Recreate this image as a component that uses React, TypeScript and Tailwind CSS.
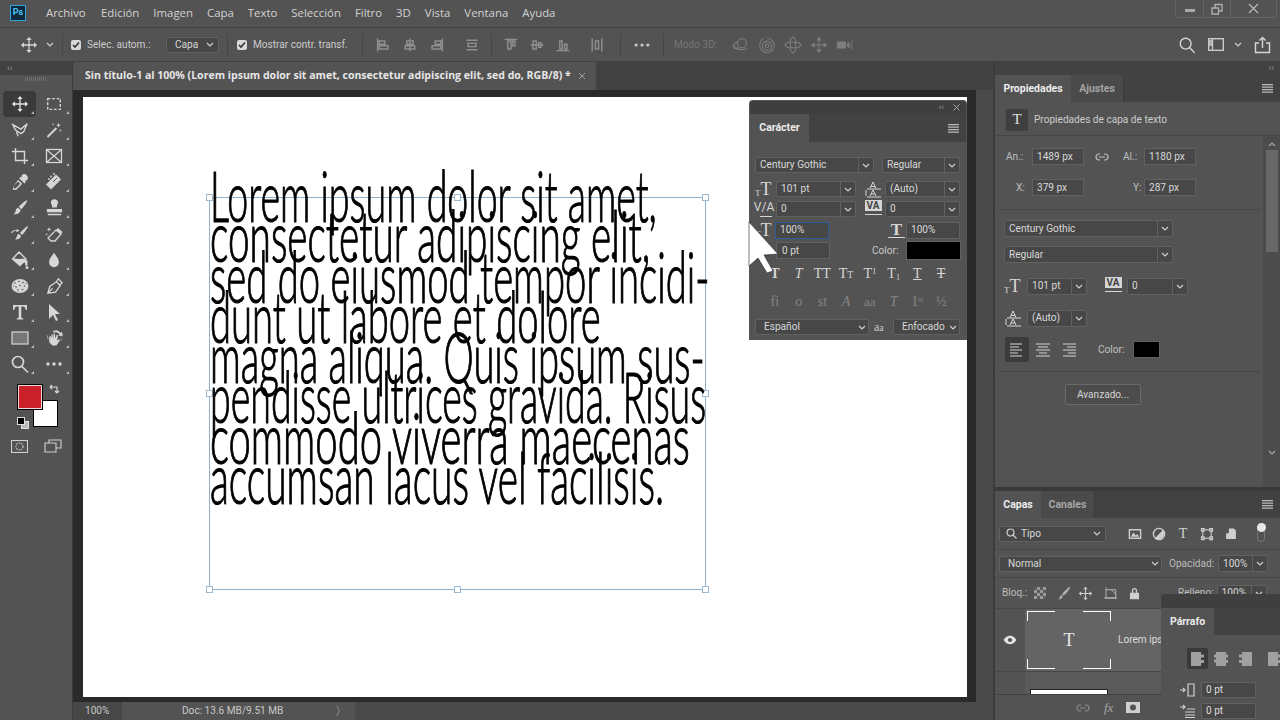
import React from "react";

type P = { d?: string; s?: number; c?: string; children?: React.ReactNode; box?: number; sw?: number; stroke?: boolean };
function Ic({ d, s = 20, c = "text-[#d6d6d6]", children, box = 20, sw = 1.4, stroke = false }: P) {
  return (
    <svg width={s} height={s} viewBox={`0 0 ${box} ${box}`} className={`shrink-0 ${c}`} fill={stroke ? "none" : "currentColor"} stroke={stroke ? "currentColor" : "none"} strokeWidth={sw}>
      {d ? <path d={d} /> : null}
      {children}
    </svg>
  );
}
const moveD = "M9.3 4h1.4v5.3H16v1.4h-5.3V16H9.3v-5.3H4V9.3h5.3zM10 1l3 3.4H7zM10 19l-3-3.4h6zM1 10l3.4-3v6zM19 10l-3.4 3V7z";
const Chev = ({ c = "text-[#cfcfcf]" }: { c?: string }) => (
  <svg width="8" height="5" viewBox="0 0 8 5" className={`shrink-0 ${c}`} fill="none" stroke="currentColor" strokeWidth="1.2"><path d="M1 1l3 3 3-3" /></svg>
);

const tools: React.ReactNode[] = [
  <Ic d={moveD} s={18} c="text-[#e4e4e4]" />,
  <Ic stroke sw={1.6} s={18}><rect x="3" y="4" width="14" height="12" strokeDasharray="3 2" /></Ic>,
  <Ic stroke sw={1.5} s={18} d="M2 4l9 5 7-6-4 9-3 2-3-2-3-2zM6 12l2 5" />,
  <Ic s={18}><path d="M2 17L12 7l1.5 1.5L3.5 18.5z" /><path d="M15 2l.7 2 2 .7-2 .7-.7 2-.7-2-2-.7 2-.7zM9 2l.4 1.2 1.2.4-1.2.4L9 5.200l-.4-1.200-1.200-.4 1.200-.4zM17 9l.4 1.200 1.200.4-1.200.4-.4 1.200-.4-1.200-1.200-.4 1.200-.4z" /></Ic>,
  <Ic stroke sw={1.6} s={18} d="M5 1v14h14M1 5h14v14" />,
  <Ic stroke sw={1.3} s={20}><rect x="2.500" y="3.500" width="15" height="13" /><path d="M3 4l14 12M17 4L3 16" /></Ic>,
  <Ic s={18}><path d="M12 2.500a2.600 2.600 0 0 1 5.500 5.500l-2 1.300 1 1-1.500 1.500-6-6 1.500-1.500 1 1z" /><path d="M8 7.500l4.500 4.500-6.500 6.500-3 .5-1-1 .5-3zm0 2l-5 5-.3 1.800.6.6L5.200 17l5-5z" /></Ic>,
  <Ic s={20}><path d="M2 14L12 4l5 5-10 10z" transform="translate(0 -1.500)" /><circle cx="5" cy="7" r=".9" /><circle cx="7" cy="4.500" r=".9" /><circle cx="10" cy="2" r=".9" /><path d="M9 10l4-4" stroke="#535353" strokeWidth="1" /></Ic>,
  <Ic s={18}><path d="M18 1.500c.6.600-3 6.500-6.500 10l-2.800-2.800C12 5 17.400.900 18 1.500z" /><path d="M8.200 9.800l2.500 2.500c-.3 3-3.500 5-8 4.800 1.800-1.500 2.300-2.500 2.500-4 .2-1.800 1.500-3 3-3.300z" /></Ic>,
  <Ic s={19}><path d="M7.500 9h5V7.500c0-1.500 1.200-2 1.200-3.500a3.500 3.500 0 0 0-7.500 0c0 1.500 1.300 2 1.300 3.500z" /><path d="M2 10.500h16V14H2zM3 15.500h14V17H3z" /></Ic>,
  <Ic s={20}><path d="M18 2c.5.500-3 6-6 9l-2-2c3-3.500 7.500-7.500 8-7z" /><path d="M9 10l2 2c-.5 2.500-3 3.800-6 3.500 1.200-1.200 1.500-2 1.800-3 .3-1.300 1-2.200 2.200-2.500z" /><path d="M1 9c.8-2.200 3-3.500 6-3l-.3-1.500L9.500 7 6.200 8l.3-1.200C4.500 6.500 3 7.500 2.300 9z" /></Ic>,
  <Ic s={20}><path d="M4 14l8-8 5 4-6 7H7z" fill="none" stroke="currentColor" strokeWidth="1.300" /><path d="M12 6l5 4 1.500-2-4.500-4z" /><path d="M5 3l.6 1.800 1.800.6-1.800.6L5 7.800 4.400 6l-1.800-.6 1.800-.6zM2.500 9l.4 1 1 .4-1 .4-.4 1-.4-1-1-.4 1-.4z" /></Ic>,
  <Ic s={20}><path d="M9 2l7 7-6 6.500L2.500 9z" fill="none" stroke="currentColor" strokeWidth="1.400" /><path d="M3 9c2-1 4 0 6 0s4-.5 6 0l2.500 2v3.500a1.200 1.200 0 0 1-2.400 0V13l-1-.6L10 15.500z" /><circle cx="17" cy="17.500" r="1.500" /></Ic>,
  <Ic s={18} d="M10 2c3 4.500 5.500 7 5.500 10.500a5.500 5.500 0 0 1-11 0C4.500 9 7 6.500 10 2z" />,
  <Ic s={20}><ellipse cx="10" cy="10" rx="8.500" ry="7" /><g fill="#535353"><circle cx="5" cy="7" r=".8" /><circle cx="9" cy="5.500" r=".8" /><circle cx="13" cy="6.500" r=".8" /><circle cx="6" cy="11" r=".8" /><circle cx="10" cy="9.500" r=".8" /><circle cx="14.500" cy="10" r=".8" /><circle cx="8" cy="14" r=".8" /><circle cx="12.500" cy="13.500" r=".8" /><circle cx="3.500" cy="10" r=".6" /><circle cx="16" cy="7.500" r=".6" /></g></Ic>,
  <Ic stroke sw={1.4} s={19} d="M3 17l2-7 7-5 4 4-5 7zM3 17l5-5M12 5l2-3 4 4-3 3" />,
  <Ic s={20} d="M3 3h14v5h-1.300c-.2-2-1-3.400-3-3.400h-1.400V15c0 1 .6 1.300 2 1.400V17.500H6.700v-1.100c1.400-.1 2-.4 2-1.400V4.600H7.300c-2 0-2.800 1.400-3 3.400H3z" />,
  <Ic s={20} d="M5 2l11 10h-5l3 6-2 1-3-6-4 4z" />,
  <Ic s={20}><rect x="2" y="4" width="16" height="12" fill="#777" stroke="#d6d6d6" strokeWidth="1.200" /></Ic>,
  <Ic s={21}><path d="M5 11V8l1.200-.3L7 10V6.500L8 6l1 4V5.500L10.200 5l.8 5 1-3.500 1.200.3-.7 5 1.800-1 1 .8-3.500 5H8l-3-3z" /><path d="M9 3a6 6 0 0 1 7 2l1-1 .5 3.500L14 7l1-1a5 5 0 0 0-6-2zM3 7l1 4M16 12l1-2" stroke="currentColor" strokeWidth=".6" /></Ic>,
  <Ic stroke sw={1.700} s={20} d="M8 2.500a5.500 5.500 0 1 1 0 11 5.500 5.500 0 0 1 0-11zM12 12.500l6 6" />,
  <Ic s={20}><circle cx="4" cy="10" r="1.700" /><circle cx="10" cy="10" r="1.700" /><circle cx="16" cy="10" r="1.700" /></Ic>,
];

function Tool({ i, active }: { i: number; active?: boolean }) {
  return (
    <div className={`relative flex h-[26px] w-[33px] items-center justify-center ${active ? "rounded-sm bg-[#3a3a3a]" : ""}`}>
      {tools[i]}
      <span className="absolute bottom-[3px] right-[2px] h-0 w-0 border-b-[3px] border-l-[3px] border-b-[#bdbdbd] border-l-transparent" />
    </div>
  );
}

const Div = ({ c = "mx-0" }: { c?: string }) => <span className={`h-[22px] w-px shrink-0 bg-[#464646] ${c}`} />;
const Check = () => (
  <span className="flex h-[10px] w-[10px] shrink-0 items-center justify-center rounded-[2px] bg-[#d8d8d8]">
    <svg width="8" height="8" viewBox="0 0 8 8" fill="none" stroke="#333" strokeWidth="1.600"><path d="M1 4l2 2 4-4.500" /></svg>
  </span>
);

function Inp({ w, t, c = "", h = "h-[17px]" }: { w: string; t: string; c?: string; h?: string }) {
  return <div className={`${w} ${h} flex shrink-0 items-center border border-[#616161] bg-[#474747] pl-[4px] text-[10.100px] text-[#d8d8d8] ${c}`}>{t}</div>;
}
function Sel({ w, t, h = "h-[17px]", seg = true, c = "" }: { w: string; t: string; h?: string; seg?: boolean; c?: string }) {
  return (
    <div className={`${w} ${h} flex shrink-0 items-center rounded-[2px] border border-[#616161] bg-[#474747] text-[10.100px] text-[#d8d8d8] ${c}`}>
      <span className="min-w-0 flex-1 whitespace-nowrap pl-[4px]">{t}</span>
      <span className={`flex h-full shrink-0 items-center justify-center ${seg ? "w-[15px] border-l border-[#616161]" : "w-[12px]"}`}><Chev /></span>
    </div>
  );
}

const SizeIc = ({ c }: { c?: string }) => (
  <span className={`flex w-[18px] shrink-0 items-end font-['Liberation_Serif',serif] leading-none text-[#d6d6d6] ${c ?? ""}`}>
    <span className="text-[9px]">T</span><span className="text-[18px]">T</span>
  </span>
);
const LeadIc = () => (
  <svg width="18" height="18" viewBox="0 0 18 18" className="shrink-0 text-[#d6d6d6]" fill="none" stroke="currentColor" strokeWidth="1">
    <path d="M6 8.500L9 2l3 6.500M7 6.500h4M3 9h14M6 16l3-6 3 6M7 14h4M3 17h14M2 10v6" />
  </svg>
);
const KernIc = () => (
  <span className="relative flex h-[18px] w-[18px] shrink-0 items-start justify-center text-[12px] leading-[15px] text-[#d6d6d6]">
    V/A<span className="absolute bottom-[1px] left-[5px] h-px w-[12px] bg-[#d6d6d6]" />
  </span>
);
const TrackIc = () => (
  <span className="relative flex h-[18px] w-[18px] shrink-0 flex-col items-center">
    <span className="flex h-[11px] w-[17px] items-center justify-center bg-[#d6d6d6] text-[10px] font-bold leading-none text-[#444]">VA</span>
    <span className="mt-[3px] h-px w-[17px] bg-[#d6d6d6]" />
  </span>
);

const Scale = ({ t, c }: { t: string; c: string }) => (
  <div className={`h-[40.300px] origin-left whitespace-nowrap ${c}`}>{t}</div>
);

function Handle({ c }: { c: string }) {
  return <span className={`absolute h-[7px] w-[7px] border border-[#9fb9d2] bg-white ${c}`} />;
}

function Tab({ t, w, on, dim }: { t: string; w: string; on?: boolean; dim?: boolean }) {
  return (
    <div className={`flex h-full items-center justify-center ${w} text-[10.500px] font-bold ${on ? "bg-[#535353] text-[#ececec]" : dim ? "border-r border-[#3a3a3a] bg-[#4a4a4a] text-[#a5a5a5]" : ""}`}>{t}</div>
  );
}
const Burger = () => (
  <svg width="11" height="9" viewBox="0 0 11 9" className="shrink-0" fill="#b8b8b8"><path d="M0 0h11v1.300H0zM0 2.500h11v1.300H0zM0 5h11v1.300H0zM0 7.500h11v1.300H0z" /></svg>
);
const AlignIc = ({ m }: { m: "l" | "c" | "r" }) => {
  const ds = { l: "M1 2h12M1 5h9M1 8h12M1 11h8M1 14h12", c: "M1 2h14M3 5h10M1 8h14M4 11h8M1 14h14", r: "M2 2h13M6 5h9M2 8h13M7 11h8M2 14h13" };
  return <svg width="16" height="16" viewBox="0 0 16 16" fill="none" stroke="#d4d4d4" strokeWidth="1.200"><path d={ds[m]} /></svg>;
};
const ParaIc = ({ v }: { v: number }) => {
  const ds = ["M1 1h10v2.500h3v3h-3v2.500h3v3h-3V15H1z", "M3 1h10v2.500h2v3h-2v2.500h2v3h-2V15H3v-3.500H1v-3h2V6.500H1v-3h2z", "M5 1h10v14H5v-3H2V9h3V6.500H2v-3h3z"];
  return <svg width="16" height="16" viewBox="0 0 16 16" fill="#a0a0a0"><path d={ds[v]} /></svg>;
};

export default function App() {
  const sty = "whitespace-nowrap text-[10.100px] text-[#cccccc]";
  return (
    <div className="relative flex h-[720px] w-[1280px] flex-col overflow-hidden bg-[#535353] font-['Roboto',sans-serif] text-[#d0d0d0]">
      {/* menu */}
      <div className="relative flex h-[28px] shrink-0 items-center border-b border-[#414141] pb-[2px] pl-[10px]">
        <div className="flex h-[16px] w-[16px] items-center justify-center border border-[#2fa3d8] bg-[#0f2a3d] text-[9px] font-bold leading-none text-[#4cc2f1]">Ps</div>
        <div className="ml-[20px] flex gap-[14px] font-['Open_Sans',sans-serif] text-[11.400px] text-[#d2d2d2]">
          <span className="w-[41px]">Archivo</span>
          {["Edición", "Imagen", "Capa", "Texto", "Selección", "Filtro", "3D", "Vista", "Ventana", "Ayuda"].map((m) => (<span key={m}>{m}</span>))}
        </div>
        <div className="absolute right-[3px] top-0 flex h-[18px] w-[102px] rounded-b-[4px] border border-t-0 border-[#656565]">
          <span className="flex w-[28px] items-center justify-center border-r border-[#656565]"><span className="mt-[4px] h-[3px] w-[10px] bg-[#a8a8a8]" /></span>
          <span className="flex w-[27px] items-center justify-center border-r border-[#656565]">
            <svg width="12" height="12" viewBox="0 0 12 12" fill="none" stroke="#b0b0b0" strokeWidth="1.300"><path d="M1 5h6.500v6H1zM4 5V1.500h7V8H7.500" /></svg>
          </span>
          <span className="flex flex-1 items-center justify-center">
            <svg width="11" height="11" viewBox="0 0 11 11" fill="none" stroke="#b8b8b8" strokeWidth="1.300"><path d="M1 1l9 9M10 1l-9 9" /></svg>
          </span>
        </div>
      </div>
      {/* options */}
      <div className="flex h-[34px] shrink-0 items-center border-b border-[#414141]">
        <span className="ml-[20px]"><Ic d={moveD} s={18} /></span>
        <span className="ml-[8px]"><Chev /></span>
        <Div c="ml-[8px]" />
        <span className="ml-[8px]"><Check /></span>
        <span className={`ml-[6px] w-[70px] ${sty}`}>Selec. autom.:</span>
        <div className="ml-[9px] flex h-[16px] w-[53px] items-center justify-between rounded-[2px] border border-[#616161] bg-[#474747] pl-[8px] pr-[4px] text-[10.100px] text-[#d8d8d8]">Capa<Chev /></div>
        <Div c="ml-[8px]" />
        <span className="ml-[9px]"><Check /></span>
        <span className={`ml-[6px] w-[100px] ${sty}`}>Mostrar contr. transf.</span>
        <Div c="ml-[9px]" />
        <span className="ml-[13px] flex w-[115px] gap-[10px]">
          {["M2 2v16M4 5h7v4H4zM4 11h11v4H4z", "M10 2v16M6 5h8v4H6zM4 11h12v4H4z", "M18 2v16M9 5h7v4H9zM5 11h11v4H5z", "M3 4h14M3 16h14M5 8h10v4H5z"].map((d, i) => (
            <svg key={i} width="16" height="20" viewBox="0 0 20 20" className={i === 3 ? "ml-[10px]" : ""} fill="none" stroke="#8f8f8f" strokeWidth="1.800"><path d={d} /></svg>
          ))}
        </span>
        <Div c="ml-[0px]" />
        <span className="ml-[11px] flex w-[117px] gap-[10px]">
          {["M2 3h16M6 5h4v10H6zM12 5h3v6h-3z", "M2 10h16M5 5h4v10H5zM12 7h3v6h-3z", "M2 17h16M6 5h3v10H6zM12 9h3v6h-3z", "M4 2v16M16 2v16M8 5h4v10H8z"].map((d, i) => (
            <svg key={i} width="16" height="20" viewBox="0 0 20 20" className={i === 3 ? "ml-[8px]" : ""} fill="none" stroke="#8f8f8f" strokeWidth="1.800"><path d={d} /></svg>
          ))}
        </span>
        <Div c="ml-[0px]" />
        <span className="ml-[12px]"><Ic c="text-[#c8c8c8]" s={18}><circle cx="3.500" cy="10" r="1.800" /><circle cx="10" cy="10" r="1.800" /><circle cx="16.500" cy="10" r="1.800" /></Ic></span>
        <Div c="ml-[12px]" />
        <span className="ml-[10px] w-[44px] whitespace-nowrap text-[10.100px] text-[#767676]">Modo 3D:</span>
        <span className="ml-[14px] flex gap-[8px]">
          <Ic stroke sw={1.200} s={18} c="text-[#7f7f7f]" d="M11 3a5 5 0 1 1 0 10 5 5 0 0 1 0-10zM6 7C2 8 0 11 3 13c3 2 9 3 14 1M2 10l1 4 4-1" />
          <Ic stroke sw={1.200} s={18} c="text-[#7f7f7f]" d="M10 6a5 5 0 1 1 0 10 5 5 0 0 1 0-10zM10 2.500a8 8 0 1 1-7 4M10 9a2 2 0 1 1 0 4 2 2 0 0 1 0-4M6 2L3 6" />
          <Ic stroke sw={1.200} s={18} c="text-[#7f7f7f]" d="M7 4l3-3 3 3v3h3l3 3-3 3h-3v3l-3 3-3-3v-3H4l-3-3 3-3h3zM7 7h6v6H7z" />
          <Ic s={18} c="text-[#7f7f7f]" d="M9.500 5h1v4.500H15v1h-4.500V15h-1v-4.500H5v-1h4.500zM10 1l3 4H7zM10 19l-3-4h6zM1 10l4-3v6zM19 10l-4 3V7z" />
          <Ic s={18} c="text-[#7f7f7f]" d="M1 6h10v8H1zM12 9l3-3v8l-3-3zM19 5l-2 5 2 5h-1l-2-5 2-5z" />
        </span>
        <span className="ml-auto flex items-center">
          <Ic stroke sw={1.500} s={18} c="text-[#d8d8d8]" d="M8.500 2.500a6 6 0 1 1 0 12 6 6 0 0 1 0-12zM13 13l5.500 5.500" />
          <svg width="16" height="13" viewBox="0 0 16 13" className="ml-[12px]" fill="none" stroke="#d0d0d0" strokeWidth="1.300"><rect x=".7" y=".7" width="14.600" height="11.600" /><path d="M4.500 1v11M1 3h3M1 5h3M1 7h3" /></svg>
          <span className="ml-[10px]"><Chev /></span>
          <svg width="17" height="18" viewBox="0 0 17 18" className="ml-[12px] mr-[9px]" fill="none" stroke="#d8d8d8" strokeWidth="1.400"><path d="M5 7H1.500v9.500h14V7H12M8.500 12V2M5.500 4.500l3-3 3 3" /></svg>
        </span>
      </div>
      {/* main */}
      <div className="flex min-h-0 flex-1">
        {/* toolbar */}
        <div className="flex w-[73px] shrink-0 flex-col border-r border-[#3c3c3c]">
          <div className="flex h-[13px] shrink-0 items-center bg-[#424242] pl-[7px] text-[9px] leading-none text-[#9a9a9a]">‹‹</div>
          <div className="flex h-[16px] shrink-0 justify-center pt-[2px]"><span className="h-[4px] w-[22px] bg-[repeating-linear-gradient(90deg,#6e6e6e_0,#6e6e6e_1px,transparent_1px,transparent_2px)]" /></div>
          <div className="grid w-[72px] grid-cols-2 pl-[3px]">
            {tools.map((_, i) => (<Tool key={i} i={i} active={i === 0} />))}
          </div>
          <div className="relative h-[60px] shrink-0">
            <span className="absolute left-[33px] top-[23px] h-[27px] w-[25px] border border-black bg-white" />
            <span className="absolute left-[18px] top-[8px] h-[24px] w-[24px] border border-[#eadada] bg-[#c9202a] outline outline-1 outline-black" />
            <svg width="11" height="11" viewBox="0 0 11 11" className="absolute left-[49px] top-[7px]" fill="none" stroke="#d8d8d8" strokeWidth="1.200"><path d="M1 3h7v6M1 3l2-2M1 3l2 2M8 9l-2-2M8 9l2-2" /></svg>
            <span className="absolute left-[21px] top-[44px] h-[8px] w-[8px] border border-[#ddd] bg-[#bbb]" />
            <span className="absolute left-[17px] top-[40px] h-[8px] w-[8px] border border-[#ddd] bg-black" />
          </div>
          <div className="flex items-center pl-[11px] pt-[2px]">
            <svg width="17" height="13" viewBox="0 0 17 13" fill="none" stroke="#d0d0d0" strokeWidth="1.100"><rect x=".5" y=".5" width="16" height="12" /><circle cx="8.500" cy="6.500" r="3.500" strokeDasharray="1.500 1" /></svg>
            <svg width="18" height="14" viewBox="0 0 18 14" className="ml-[16px]" fill="none" stroke="#d0d0d0" strokeWidth="1.100"><path d="M5 4V1h12v8h-5M1 4h11v9H1z" /></svg>
          </div>
        </div>
        {/* center */}
        <div className="flex w-[920px] shrink-0 flex-col">
          <div className="flex h-[28px] shrink-0 bg-[#424242]">
            <div className="flex w-[523px] items-center bg-[#535353] pl-[12px] font-['Open_Sans',sans-serif] text-[10.560px] font-bold text-[#e6e6e6]">
              <span className="whitespace-nowrap">Sin título-1 al 100% (Lorem ipsum dolor sit amet, consectetur adipiscing elit, sed do, RGB/8) *</span>
              <svg width="8" height="8" viewBox="0 0 8 8" className="ml-[7px] shrink-0" fill="none" stroke="#a0a0a0" strokeWidth="1"><path d="M1 1l6 6M7 1L1 7" /></svg>
            </div>
          </div>
          <div className="flex min-h-0 flex-1">
            <div className="w-[903px] bg-[#2a2a2a] pl-[10px] pt-[7px]">
              <div className="relative h-[600px] w-[884px] bg-white">
                {/* text frame */}
                <div className="absolute left-[126px] top-[100px] h-[393px] w-[497px] border border-[#8eb0cf]">
                  <Handle c="-left-[4px] -top-[4px]" />
                  <Handle c="left-[244px] -top-[4px]" />
                  <Handle c="-right-[4px] -top-[4px]" />
                  <Handle c="-left-[4px] top-[192px]" />
                  <Handle c="-right-[4px] top-[192px]" />
                  <Handle c="-left-[4px] -bottom-[4px]" />
                  <Handle c="left-[244px] -bottom-[4px]" />
                  <Handle c="-right-[4px] -bottom-[4px]" />
                </div>
                <div className="absolute left-[127px] top-[78px] font-['Lato',sans-serif] text-[70px] font-light leading-[40.300px] text-black [-webkit-text-stroke:1.200px_#000]">
                  <Scale t="Lorem ipsum dolor sit amet," c="scale-x-[0.537]" />
                  <Scale t="consectetur adipiscing elit," c="scale-x-[0.554]" />
                  <Scale t="sed do eiusmod tempor incidi-" c="scale-x-[0.547]" />
                  <Scale t="dunt ut labore et dolore" c="scale-x-[0.546]" />
                  <Scale t="magna aliqua. Quis ipsum sus-" c="scale-x-[0.545]" />
                  <Scale t="pendisse ultrices gravida. Risus" c="scale-x-[0.536]" />
                  <Scale t="commodo viverra maecenas" c="scale-x-[0.572]" />
                  <Scale t="accumsan lacus vel facilisis." c="scale-x-[0.556]" />
                </div>
                {/* character panel */}
                <div className="absolute left-[667px] top-[4px] flex h-[238px] w-[216px] flex-col rounded-t-[3px] bg-[#535353] shadow-[0_0_0_1px_#555]">
                  <div className="flex h-[13px] shrink-0 items-center justify-end gap-[9px] rounded-t-[3px] bg-[#3f3f3f] pr-[6px] text-[9px] leading-none text-[#9a9a9a]">
                    <span>‹‹</span>
                    <svg width="7" height="7" viewBox="0 0 7 7" fill="none" stroke="#a8a8a8"><path d="M.5.500l6 6M6.500.500l-6 6" /></svg>
                  </div>
                  <div className="flex h-[28px] shrink-0 items-center justify-between bg-[#424242] pr-[7px]">
                    <Tab t="Carácter" w="w-[59px]" on />
                    <Burger />
                  </div>
                  <div className="mt-[15px] flex gap-[8px] pl-[5px]">
                    <Sel w="w-[119px]" t="Century Gothic" h="h-[16px]" />
                    <Sel w="w-[78px]" t="Regular" h="h-[16px]" />
                  </div>
                  <div className="mt-[7px] flex h-[18px] items-center pl-[5px]">
                    <SizeIc />
                    <Sel w="w-[80px]" t="101 pt" c="ml-[3px]" h="h-[16px]" />
                    <span className="ml-[8px]"><LeadIc /></span>
                    <Sel w="w-[75px]" t="(Auto)" c="ml-[3px]" h="h-[16px]" />
                  </div>
                  <div className="mt-[2px] flex h-[18px] items-center pl-[5px]">
                    <KernIc />
                    <Sel w="w-[80px]" t="0" c="ml-[3px]" h="h-[16px]" />
                    <span className="ml-[8px]"><TrackIc /></span>
                    <Sel w="w-[75px]" t="0" c="ml-[3px]" h="h-[16px]" />
                  </div>
                  <div className="mt-[3px] flex h-[18px] items-center pl-[5px]">
                    <SizeIc />
                    <Inp w="w-[54px]" t="100%" c="ml-[2px] !border-[#2c5d96]" />
                    <span className="ml-[59px] flex w-[17px] shrink-0 flex-col items-center font-['Liberation_Serif',serif] text-[17px] font-bold leading-[15px] text-[#d6d6d6]">T<span className="h-px w-[17px] bg-[#d6d6d6]" /></span>
                    <Inp w="w-[54px]" t="100%" c="ml-[1px]" />
                  </div>
                  <div className="mt-[2px] flex h-[19px] items-center pl-[26px]">
                    <Inp w="w-[54px]" t="0 pt" c="pl-[5px]" />
                    <span className="ml-[42px] w-[34px] text-[10.100px] text-[#c8c8c8]">Color:</span>
                    <span className="h-[19px] w-[55px] border border-[#616161] bg-black" />
                  </div>
                  <div className="mt-[5px] grid h-[18px] w-[216px] grid-cols-8 px-[13px] font-['Liberation_Serif',serif] text-[14px] leading-[18px] text-[#d6d6d6]">
                    <span className="text-center font-bold">T</span>
                    <span className="text-center italic">T</span>
                    <span className="text-center">TT</span>
                    <span className="text-center">T<span className="text-[10px]">T</span></span>
                    <span className="text-center">T<sup className="text-[8px]">1</sup></span>
                    <span className="text-center">T<sub className="text-[8px]">1</sub></span>
                    <span className="text-center underline">T</span>
                    <span className="text-center line-through">T</span>
                  </div>
                  <div className="mt-[10px] grid h-[18px] w-[216px] grid-cols-8 px-[13px] font-['Liberation_Serif',serif] text-[14px] leading-[18px] text-[#858585]">
                    <span className="text-center">fi</span>
                    <span className="text-center italic">o</span>
                    <span className="text-center">st</span>
                    <span className="text-center italic">A</span>
                    <span className="text-center text-[13px]">aa</span>
                    <span className="text-center italic">T</span>
                    <span className="text-center">1<sup className="text-[8px]">st</sup></span>
                    <span className="text-center">½</span>
                  </div>
                  <div className="mt-[8px] flex items-center pl-[5px]">
                    <Sel w="w-[114px]" t="Español" seg={false} h="h-[16px]" c="[&>span:first-child]:pl-[8px]" />
                    <span className="ml-[5px] w-[19px] font-['Liberation_Serif',serif] text-[12px] leading-none text-[#c8c8c8]">a<span className="text-[10px]">a</span></span>
                    <Sel w="w-[67px]" t="Enfocado" seg={false} h="h-[16px]" c="[&>span:first-child]:pl-[8px]" />
                  </div>
                  {/* mouse pointer */}
                  <svg width="32" height="54" viewBox="0 0 32 54" className="absolute -left-[2px] top-[120px]" fill="#fff" stroke="#222" strokeWidth=".6">
                    <path d="M1 1L30 33 16 34 25 50 19 52 10 37 1 45z" />
                  </svg>
                </div>
              </div>
            </div>
            <div className="flex-1 bg-[#4a4a4a]" />
          </div>
          <div className="flex h-[18px] shrink-0 bg-[#4a4a4a] text-[10.100px] text-[#c8c8c8]">
            <div className="flex w-[49px] items-center bg-[#474747] pl-[12px]">100%</div>
            <div className="flex w-[233px] items-center bg-[#535353] pl-[60px]">
              <span className="whitespace-nowrap">Doc: 13.6 MB/9.51 MB</span>
              <span className="ml-auto mr-[8px] text-[12px] leading-none">〉</span>
            </div>
          </div>
        </div>
        {/* right */}
        <div className="flex min-w-0 flex-1 flex-col border-l-2 border-[#3c3c3c]">
          <div className="flex h-[13px] shrink-0 items-center justify-end bg-[#424242] pr-[6px] text-[9px] leading-none text-[#9a9a9a]">››</div>
          <div className="flex h-[27px] shrink-0 items-center bg-[#424242] pr-[7px]">
            <Tab t="Propiedades" w="w-[76px]" on />
            <Tab t="Ajustes" w="w-[53px]" dim />
            <span className="ml-auto"><Burger /></span>
          </div>
          <div className="flex h-[34px] shrink-0 items-center border-b border-[#464646] pl-[11px] pt-[2px]">
            <span className="flex h-[22px] w-[22px] items-center justify-center rounded-[2px] bg-[#3f3f3f] font-['Liberation_Serif',serif] text-[15px] text-[#e0e0e0]">T</span>
            <span className="ml-[6px] text-[10.100px] text-[#cccccc]">Propiedades de capa de texto</span>
          </div>
          <div className="flex min-h-0 flex-1">
            <div className="flex min-w-0 flex-1 flex-col">
              <div className="mt-[12px] flex items-center pl-[11px]">
                <span className="w-[26px] text-[10.100px] text-[#bdbdbd]">An.:</span>
                <Inp w="w-[52px]" t="1489 px" />
                <svg width="14" height="8" viewBox="0 0 14 8" className="ml-[11px]" fill="none" stroke="#c0c0c0" strokeWidth="1.200"><path d="M5 1H4a3 3 0 0 0 0 6h1M9 1h1a3 3 0 0 1 0 6H9M4 4h6" /></svg>
                <span className="ml-[14px] w-[21px] text-[10.100px] text-[#bdbdbd]">Al.:</span>
                <Inp w="w-[52px]" t="1180 px" />
              </div>
              <div className="mt-[14px] flex items-center pl-[21px]">
                <span className="w-[16px] text-[10.100px] text-[#bdbdbd]">X:</span>
                <Inp w="w-[52px]" t="379 px" />
                <span className="ml-[39px] w-[21px] pl-[10px] text-[10.100px] text-[#bdbdbd]">Y:</span>
                <Inp w="w-[52px]" t="287 px" c="ml-[0px]" />
              </div>
              <div className="ml-[4px] mr-[2px] mt-[13px] h-px bg-[#484848]" />
              <div className="mt-[10px] pl-[9px]"><Sel w="w-[169px]" t="Century Gothic" /></div>
              <div className="mt-[9px] pl-[9px]"><Sel w="w-[169px]" t="Regular" /></div>
              <div className="mt-[14px] flex items-center pl-[9px]">
                <SizeIc />
                <Sel w="w-[60px]" t="101 pt" c="ml-[5px]" />
                <span className="ml-[17px]"><TrackIc /></span>
                <Sel w="w-[61px]" t="0" c="ml-[5px]" />
              </div>
              <div className="mt-[14px] flex items-center pl-[9px]">
                <LeadIc />
                <Sel w="w-[60px]" t="(Auto)" c="ml-[5px]" />
              </div>
              <div className="mt-[10px] flex items-center pl-[10px]">
                <span className="flex h-[25px] w-[24px] items-center justify-center rounded-[2px] bg-[#3c3c3c]"><AlignIc m="l" /></span>
                <span className="ml-[6px]"><AlignIc m="c" /></span>
                <span className="ml-[10px]"><AlignIc m="r" /></span>
                <span className="ml-[21px] w-[35px] text-[10.100px] text-[#c0c0c0]">Color:</span>
                <span className="h-[17px] w-[27px] border border-[#616161] bg-black" />
              </div>
              <div className="ml-[4px] mr-[2px] mt-[9px] h-px bg-[#484848]" />
              <div className="ml-[70px] mt-[12px] flex h-[21px] w-[76px] items-center justify-center rounded-[2px] border border-[#6a6a6a] bg-[#4c4c4c] text-[10.100px] text-[#d4d4d4]">Avanzado...</div>
            </div>
            <div className="flex w-[17px] shrink-0 flex-col items-center bg-[#4c4c4c]">
              <span className="mt-[6px]"><Chev c="rotate-180 text-[#a8a8a8]" /></span>
              <span className="mt-[3px] h-[102px] w-[12px] bg-[#686868]" />
              <span className="mb-[32px] mt-auto"><Chev c="text-[#a8a8a8]" /></span>
            </div>
          </div>
          <div className="h-[4px] shrink-0 bg-[#3a3a3a]" />
          {/* layers */}
          <div className="flex h-[27px] shrink-0 items-center bg-[#424242] pr-[7px]">
            <Tab t="Capas" w="w-[46px]" on />
            <Tab t="Canales" w="w-[54px]" dim />
            <span className="ml-auto"><Burger /></span>
          </div>
          <div className="flex h-[32px] shrink-0 items-center border-b border-[#474747] pl-[4px]">
            <div className="flex h-[16px] w-[107px] items-center rounded-[2px] border border-[#616161] bg-[#474747] pl-[6px] pr-[4px] text-[10.100px] text-[#d8d8d8]">
              <svg width="11" height="11" viewBox="0 0 11 11" fill="none" stroke="#d0d0d0" strokeWidth="1.200"><path d="M4.500 1a3.500 3.500 0 1 1 0 7 3.500 3.500 0 0 1 0-7zM7 7l3.500 3.500" /></svg>
              <span className="ml-[4px]">Tipo</span><span className="ml-auto"><Chev /></span>
            </div>
            <span className="ml-[22px] flex items-center gap-[10px]">
              <Ic s={14} c="text-[#cfcfcf]"><path d="M1 3h18v14H1zm2 2v10h14V5z" /><path d="M4 14l4-6 3 4 2-2 3 4z" /></Ic>
              <Ic s={14} c="text-[#cfcfcf]"><circle cx="10" cy="10" r="8" fill="none" stroke="currentColor" strokeWidth="2" /><path d="M15.600 4.400A8 8 0 0 1 4.400 15.600z" /></Ic>
              <span className="w-[14px] text-center font-['Liberation_Serif',serif] text-[14px] leading-none text-[#cfcfcf]">T</span>
              <Ic stroke sw={1.500} s={14} c="text-[#cfcfcf]"><rect x="4" y="4" width="12" height="12" /><path d="M2 2h4v4H2zM14 2h4v4h-4zM2 14h4v4H2zM14 14h4v4h-4z" /></Ic>
              <Ic s={14} c="text-[#cfcfcf]"><path d="M7 2h7l3 3v12H3V9h4z" /></Ic>
            </span>
            <span className="relative ml-[19px] h-[16px] w-[8px] rounded-full border border-[#777]"><span className="absolute -left-[1.500px] -top-[4px] h-[9px] w-[9px] rounded-full bg-[#e8e8e8]" /></span>
          </div>
          <div className="flex h-[28px] shrink-0 items-center border-b border-[#474747] pl-[4px]">
            <Sel w="w-[163px]" t="Normal" seg={false} h="h-[16px]" c="[&>span:first-child]:pl-[8px]" />
            <span className="ml-[7px] w-[49px] text-[10.100px] text-[#bdbdbd]">Opacidad:</span>
            <Sel w="w-[50px]" t="100%" c="ml-[0px]" />
          </div>
          <div className="flex h-[30px] shrink-0 items-center pl-[7px]">
            <span className="w-[32px] text-[10.100px] text-[#bdbdbd]">Bloq.:</span>
            <span className="flex items-center gap-[7px]">
              <svg width="12" height="12" viewBox="0 0 12 12"><rect width="12" height="12" fill="#9a9a9a" /><path d="M0 0h3v3H0zM6 0h3v3H6zM3 3h3v3H3zM9 3h3v3H9zM0 6h3v3H0zM6 6h3v3H6zM3 9h3v3H3zM9 9h3v3H9z" fill="#5c5c5c" /></svg>
              <Ic s={15} c="ml-[3px] text-[#b0b0b0]" d="M18 1l1 1c-2 4-6 9-9 11l-2-2c2-3 7-8 10-10zM7 12l2 2c-.5 2.500-3 4-6 4 1-1 1.500-2 2-3 .3-1.500 1-2.500 2-3z" />
              <Ic d={moveD} s={15} c="text-[#cfcfcf]" />
              <Ic stroke sw={1.300} s={15} c="ml-[3px] text-[#b8b8b8]" d="M4 5h13v11H4zM1 16h18M4 2v3M11 5l6 6" />
              <Ic s={13} c="ml-[3px] text-[#d0d0d0]" d="M3 9h14v10H3zM6 9V5.500a4 4 0 0 1 8 0V9h-2V5.500a2 2 0 0 0-4 0V9z" />
            </span>
            <span className="ml-[37px] text-[10.100px] text-[#bdbdbd]">Relleno:</span>
            <Sel w="w-[50px]" t="100%" c="ml-[3px]" />
          </div>
          <div className="flex h-[64px] shrink-0 border-y border-[#474747]">
            <div className="flex w-[30px] shrink-0 items-center justify-center">
              <Ic s={14} c="text-[#e2e2e2]" d="M10 4C5 4 2 8 1 10c1 2 4 6 9 6s8-4 9-6c-1-2-4-6-9-6zm0 3a3 3 0 1 1 0 6 3 3 0 0 1 0-6z" />
            </div>
            <div className="flex flex-1 items-center bg-[#646464] pl-[2px]">
              <div className="relative flex h-[58px] w-[84px] shrink-0 items-center justify-center font-['Liberation_Serif',serif] text-[18px] text-[#e8e8e8]">
                T
                <span className="absolute left-0 top-0 h-[10px] w-[28px] border-l border-t border-white" />
                <span className="absolute right-0 top-0 h-[10px] w-[28px] border-r border-t border-white" />
                <span className="absolute bottom-0 left-0 h-[10px] w-[28px] border-b border-l border-white" />
                <span className="absolute bottom-0 right-0 h-[10px] w-[28px] border-b border-r border-white" />
              </div>
              <span className="ml-[7px] whitespace-nowrap text-[10.100px] text-[#dedede]">Lorem ipsum</span>
            </div>
          </div>
          <div className="flex h-[22px] shrink-0 items-end border-l-[30px] border-l-[#535353] bg-[#5a5a5a] pl-[5px]">
            <span className="h-[5px] w-[78px] border-x border-t border-[#222] bg-white" />
          </div>
          <div className="flex h-[26px] shrink-0 items-center border-t border-[#404040] pl-[81px]">
            <svg width="14" height="8" viewBox="0 0 14 8" fill="none" stroke="#8a8a8a" strokeWidth="1.200"><path d="M5 1H4a3 3 0 0 0 0 6h1M9 1h1a3 3 0 0 1 0 6H9M4 4h6" /></svg>
            <span className="ml-[14px] font-['Liberation_Serif',serif] text-[13px] italic text-[#a8a8a8]">fx</span>
            <svg width="14" height="11" viewBox="0 0 14 11" className="ml-[13px]"><rect width="14" height="11" fill="#d0d0d0" /><circle cx="7" cy="5.500" r="3" fill="#535353" /></svg>
          </div>
        </div>
      </div>
      {/* paragraph floating panel */}
      <div className="absolute left-[1161px] top-[594px] flex h-[126px] w-[119px] flex-col overflow-hidden rounded-tl-[3px] bg-[#535353]">
        <div className="h-[14px] shrink-0 bg-[#3f3f3f]" />
        <div className="flex h-[27px] shrink-0 bg-[#424242]">
          <Tab t="Párrafo" w="w-[53px]" on />
        </div>
        <div className="ml-[26px] mt-[13px] flex items-center">
          <span className="flex h-[21px] w-[21px] shrink-0 items-center justify-center rounded-[2px] bg-[#3a3a3a]"><ParaIc v={0} /></span>
          <span className="ml-[5px]"><ParaIc v={1} /></span>
          <span className="ml-[8px]"><ParaIc v={2} /></span>
          <span className="ml-[14px]"><ParaIc v={0} /></span>
        </div>
        <div className="ml-[19px] mt-[13px] flex items-center">
          <svg width="15" height="14" viewBox="0 0 15 14" fill="none" stroke="#d0d0d0" strokeWidth="1.200"><path d="M0 7h5M3 5l2 2-2 2M8 1h6v12H8z" /></svg>
          <span className="ml-[6px] flex h-[16px] w-[55px] items-center border border-[#616161] bg-[#474747] pl-[4px] text-[10.100px] text-[#dcdcdc]">0 pt</span>
        </div>
        <div className="ml-[19px] mt-[5px] flex items-center">
          <svg width="15" height="14" viewBox="0 0 15 14" fill="none" stroke="#d0d0d0" strokeWidth="1.200"><path d="M0 3h5M3 1l2 2-2 2M7 5h8M5 8h10M5 11h10M5 13.500h10" /></svg>
          <span className="ml-[6px] flex h-[16px] w-[55px] items-center border border-[#616161] bg-[#474747] pl-[4px] text-[10.100px] text-[#dcdcdc]">0 pt</span>
        </div>
      </div>
    </div>
  );
}
